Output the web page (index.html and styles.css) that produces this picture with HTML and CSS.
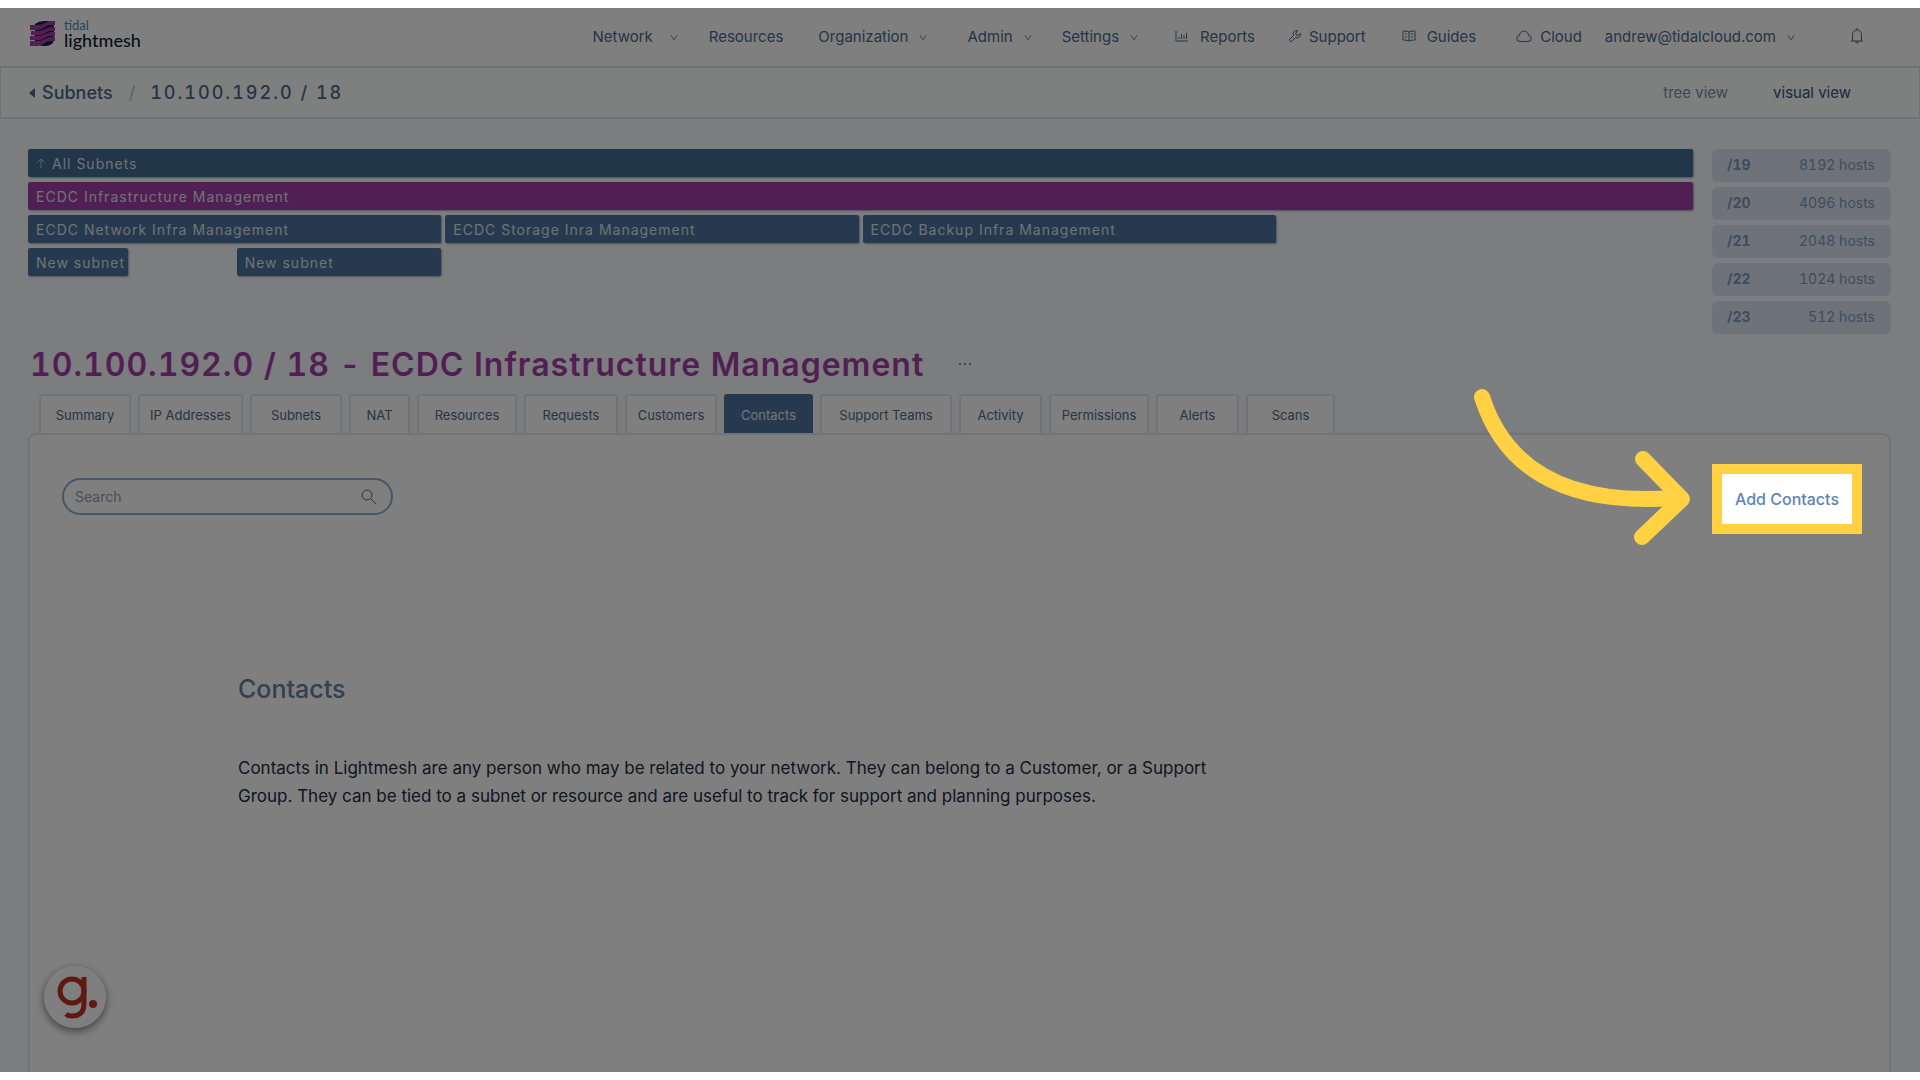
FILE: index.html
```html
<!DOCTYPE html>
<html lang="en">
<head>
<meta charset="utf-8">
<title>Tidal Lightmesh - Contacts</title>
<link rel="stylesheet" href="styles.css">
</head>
<body>
<div class="frame">
  <header class="topbar">
    <a class="brand" href="#">
      <svg class="brand-mark" viewBox="0 0 26 26" aria-hidden="true">
        <path d="M5 3Q9 0 14 0h4q6 2 6 6v13q-1 6-10 6-7 0-9-5z" fill="#151c3a"/>
        <g fill="#a23ea6"><path d="M0 4h7q5 0 8-2t6-2h4v4h-4q-4 0-6 2t-7 3H0z"/><path d="M1 10h7q4 0 7-2t6-2h4v4h-4q-4 0-6 2t-6 2H1z"/><path d="M0 15h7q5 0 8-2t6-2h4v4h-4q-4 0-6 2t-6 2H0z"/><path d="M0 20h7q5 0 8-2t6-2h4v4h-4q-4 0-6 2t-7 3H0z"/></g>
      </svg>
      <span class="brand-name"><span class="brand-top">tidal</span><span class="brand-bottom">lightmesh</span></span>
    </a>
    <nav class="menu">
      <a class="m-network" href="#">Network <svg class="chev" viewBox="0 0 10 8"><path d="M1 1l4 6 4-6"/></svg></a>
      <a class="m-resources" href="#">Resources</a>
      <a class="m-org" href="#">Organization <svg class="chev" viewBox="0 0 10 8"><path d="M1 1l4 6 4-6"/></svg></a>
      <a class="m-admin" href="#">Admin <svg class="chev" viewBox="0 0 10 8"><path d="M1 1l4 6 4-6"/></svg></a>
      <a class="m-settings" href="#">Settings <svg class="chev" viewBox="0 0 10 8"><path d="M1 1l4 6 4-6"/></svg></a>
      <a class="m-reports" href="#"><svg class="ico" viewBox="0 0 14 14"><path d="M1 2v10h12M4 10V8M6.500 10V5M9 10V6M11.500 10V4"/></svg> Reports</a>
      <a class="m-support" href="#"><svg class="ico" viewBox="0 0 14 14"><path d="M9.500 1.500a3.500 3.500 0 0 0-4 5L1 11l2 2 4.500-4.500a3.500 3.500 0 0 0 5-4L10 6.500 8 6V4z"/></svg> Support</a>
      <a class="m-guides" href="#"><svg class="ico" viewBox="0 0 14 14"><path d="M7 3v9M7 3Q6 2 1 2v9q5 0 6 1 1-1 6-1V2Q8 2 7 3zM3 5h2M3 8h2M9 5h2M9 8h2"/></svg> Guides</a>
      <a class="m-cloud" href="#"><svg class="ico wide" viewBox="0 0 16 14"><path d="M4 12.500a3 3 0 0 1-.5-6 4.500 4.500 0 0 1 9 0 3 3 0 0 1-.5 6z"/></svg> Cloud</a>
      <a class="m-user" href="#">andrew@tidalcloud.com <svg class="chev" viewBox="0 0 10 8"><path d="M1 1l4 6 4-6"/></svg></a>
      <button class="bell" type="button" aria-label="Notifications"><svg viewBox="0 0 14 16"><path d="M7 0v2M1 13h12M2.500 13V6.500a4.500 4.500 0 0 1 9 0V13M5.500 13q0 2 1.500 2t1.500-2"/></svg></button>
    </nav>
  </header>

  <div class="subbar">
    <div class="crumbs">
      <svg class="back" viewBox="0 0 6 10" aria-hidden="true"><path d="M6 0v10L0 5z"/></svg>
      <a class="crumb" href="#">Subnets</a>
      <span class="slash">/</span>
      <span class="crumb address">10.100.192.0 / 18</span>
    </div>
    <div class="views"><a class="tree" href="#">tree view</a><a class="visual" href="#">visual view</a></div>
  </div>

  <main class="content">
    <section class="map">
      <div class="blocks">
        <a class="block all" href="#"><svg class="up" viewBox="0 0 10 10"><path d="M5 10V1M1 5l4-4 4 4"/></svg>All Subnets</a>
        <a class="block current" href="#">ECDC Infrastructure Management</a>
        <a class="block quarter" href="#">ECDC Network Infra Management</a>
        <a class="block quarter" href="#">ECDC Storage Inra Management</a>
        <a class="block quarter" href="#">ECDC Backup Infra Management</a>
        <a class="block first" href="#">New subnet</a>
        <a class="block third" href="#">New subnet</a>
      </div>
      <ul class="sizes">
        <li><b>/19</b><span>8192 hosts</span></li>
        <li><b>/20</b><span>4096 hosts</span></li>
        <li><b>/21</b><span>2048 hosts</span></li>
        <li><b>/22</b><span>1024 hosts</span></li>
        <li><b>/23</b><span>512 hosts</span></li>
      </ul>
    </section>

    <div class="heading">
      <h1>10.100.192.0 / 18 - ECDC Infrastructure Management</h1>
      <button class="more" type="button" aria-label="More actions"><svg viewBox="0 0 14 4"><circle cx="2" cy="2" r="1"/><circle cx="7" cy="2" r="1"/><circle cx="12" cy="2" r="1"/></svg></button>
    </div>

    <nav class="tabs">
      <a class="w92" href="#">Summary</a>
      <a class="w105" href="#">IP Addresses</a>
      <a class="w92" href="#">Subnets</a>
      <a class="w61" href="#">NAT</a>
      <a class="w100" href="#">Resources</a>
      <a class="w94" href="#">Requests</a>
      <a class="w92" href="#">Customers</a>
      <a class="w89 active" href="#">Contacts</a>
      <a class="w132" href="#">Support Teams</a>
      <a class="w83" href="#">Activity</a>
      <a class="w100" href="#">Permissions</a>
      <a class="w83" href="#">Alerts</a>
      <a class="w89" href="#">Scans</a>
    </nav>

    <section class="panel">
      <div class="tools">
        <label class="search">
          <input type="search" placeholder="Search" aria-label="Search">
          <svg viewBox="0 0 16 16" aria-hidden="true"><circle cx="6" cy="6" r="5"/><path d="M10 10l5 5"/></svg>
        </label>
        <div class="spotlight">
          <button class="add" type="button">Add Contacts</button>
          <svg class="arrow" viewBox="0 0 224 164" aria-hidden="true"><path d="M12 14C32 77 85 124 205 115M173 76l39 40-40 38"/></svg>
        </div>
      </div>
      <div class="empty">
        <h2>Contacts</h2>
        <p>Contacts in Lightmesh are any person who may be related to your network. They can belong to a Customer, or a Support Group. They can be tied to a subnet or resource and are useful to track for support and planning purposes.</p>
      </div>
    </section>
  </main>

  <button class="badge" type="button" aria-label="Guide">
    <svg viewBox="0 0 62 62" aria-hidden="true"><circle cx="28" cy="25" r="12"/><path d="M40 11v27q0 12-12 12-4 0-6-2"/><circle class="dot" cx="49" cy="38" r="4"/></svg>
  </button>
</div>
</body>
</html>
```
FILE: styles.css
```css
* { box-sizing: border-box; }
body { margin: 0; padding: 8px 0; background: #fff; font-family: Inter, "Liberation Sans", sans-serif; color: #4a6a8a; }
a { color: inherit; text-decoration: none; }
button { font: inherit; border: 0; background: none; padding: 0; color: inherit; }
svg { fill: none; stroke: currentColor; flex: none; }
h1, h2, p, ul { margin: 0; padding: 0; }

.frame { position: relative; overflow: hidden; height: calc(100vh - 16px); display: flex; flex-direction: column; background: #f8fafe; }

.topbar { display: flex; justify-content: space-between; height: 58px; padding: 0 56px 0 30px; background: #fff; }
.brand { display: flex; gap: 8px; padding-top: 11px; }
.brand-mark { width: 26px; height: 26px; margin-top: 2px; stroke: none; }
.brand-name { display: flex; flex-direction: column; font-family: Lato, sans-serif; }
.brand-top { font-size: 13px; line-height: 13px; color: #4a8fb0; }
.brand-bottom { font-size: 18px; line-height: 17px; color: #0c1c2e; font-weight: 500; }
.menu { display: flex; align-items: center; height: 56px; font-size: 15px; }
.menu a { display: flex; align-items: center; }
.chev { width: 8px; height: 7px; margin: 3px 1px 0 11px; }
.ico { width: 14px; height: 14px; margin-right: 11px; }
.bell svg { width: 14px; height: 18px; display: block; }
.m-network .chev { margin-left: 17px; }
.m-network { margin-right: 30px; }
.m-resources { margin-right: 35px; }
.m-org { margin-right: 39px; }
.m-admin { margin-right: 29px; }
.m-settings { margin-right: 36px; }
.m-reports { margin-right: 33px; }
.m-support { margin-right: 36px; }
.m-support .ico { margin-right: 7px; }
.m-guides { margin-right: 40px; }
.ico.wide { width: 16px; margin-right: 8px; }
.m-cloud { margin-right: 23px; }
.m-user { margin-right: 54px; }

.subbar { display: flex; justify-content: space-between; align-items: center; height: 53px; padding: 0 68px 0 28px; background: #fcfffe; border: 2px solid #e0e4f4; border-left-width: 1px; border-right-width: 1px; flex: none; }
.crumbs { display: flex; align-items: center; font-size: 18px; font-weight: 500; }
.back { width: 6px; height: 10px; margin-right: 7px; fill: currentColor; stroke: none; }
.slash { margin: 0 15px 0 16px; color: #bcc4cc; font-weight: 400; }
.address { letter-spacing: 2px; font-variant-numeric: tabular-nums; }
.views { display: flex; gap: 45px; font-size: 15px; }
.tree { color: #7890a8; }
.visual { color: #2f5680; }

.content { flex: 1; display: flex; flex-direction: column; padding: 30px 29px 0 28px; }
.map { display: flex; gap: 19px; }
.blocks { flex: 1; display: grid; grid-template-columns: repeat(16, 1fr); grid-auto-rows: 28px; gap: 5px 4px; align-content: start; }
.block { display: flex; align-items: center; padding-left: 8px; background: #4c739c; color: #dce6f0; border-radius: 2px; font-size: 14px; letter-spacing: 1px; white-space: nowrap; box-shadow: 1px 1px 2px #9aa8bb; }
.all, .current { grid-column: span 16; }
.all { background: #446c94; }
.up { width: 10px; height: 10px; margin-right: 6px; opacity: .7; }
.current { background: #a43ea8; }
.quarter { grid-column: span 4; }
.first { grid-column: 1; grid-row: 4; }
.third { grid-column: 3 / span 2; grid-row: 4; }
.sizes { width: 179px; list-style: none; display: grid; gap: 5px; font-size: 14px; color: #7c9abc; font-variant-numeric: tabular-nums; }
.sizes li { display: flex; justify-content: space-between; align-items: center; height: 33px; padding: 0 16px 2px 15px; background: #dce6f2; border-radius: 6px; }
.sizes b { font-weight: 700; }

.heading { display: flex; align-items: center; gap: 34px; height: 60px; padding-left: 2px; }
h1 { font-size: 32px; font-weight: 600; letter-spacing: 1px; font-variant-numeric: tabular-nums; color: #a43ea8; white-space: nowrap; }
.more svg { width: 14px; height: 4px; display: block; fill: currentColor; stroke: none; }

.tabs { display: flex; gap: 7px; padding-left: 11px; font-size: 13px; }
.tabs a { display: flex; align-items: center; justify-content: center; height: 39px; background: #fff; border: 2px solid #e0e8f2; border-bottom: 0; border-radius: 3px 3px 0 0; white-space: nowrap; }
.tabs .active { background: #4c739c; border-color: #4c739c; color: #e6edf5; }
.w61 { width: 61px; } .w83 { width: 83px; } .w89 { width: 89px; } .w92 { width: 92px; } .w94 { width: 94px; } .w100 { width: 100px; } .w105 { width: 105px; } .w132 { width: 132px; }

.panel { flex: 1; background: #fff; border: 2px solid #e0e8f2; border-bottom: 0; border-radius: 8px 8px 0 0; padding: 29px 27px 0 32px; }
.tools { display: flex; justify-content: space-between; align-items: flex-start; }
.search { display: flex; align-items: center; width: 331px; height: 37px; margin-top: 14px; padding: 0 14px 0 11px; border: 2px solid #8caccc; border-radius: 19px; }
.search input { flex: 1; min-width: 0; border: 0; outline: 0; padding: 0; background: none; font: inherit; font-size: 14px; }
.search input::placeholder { color: #90a0b2; opacity: 1; }
.search svg { width: 16px; height: 16px; }

/* guided-tour highlight: the outer shadow dims the rest of the page */
.spotlight { position: relative; z-index: 2; padding: 10px; border: 0; background: #ffd143; box-shadow: 0 0 0 2400px rgba(0, 0, 0, .5); }
.add { display: block; width: 130px; height: 50px; background: #fff; color: #5c86b0; font-size: 16px; font-weight: 500; }
.arrow { position: absolute; right: 168px; top: -81px; width: 224px; height: 164px; stroke: #ffd143; stroke-width: 16; stroke-linecap: round; stroke-linejoin: round; }

.empty { max-width: 980px; margin: 139px 0 0 176px; }
h2 { font-size: 25px; line-height: 32px; font-weight: 500; color: #64809e; }
.empty p { margin-top: 49px; font-size: 17px; line-height: 28px; color: #1c2c44; }

.badge { position: absolute; left: 44px; bottom: 44px; width: 62px; height: 62px; border-radius: 50%; background: #fff; box-shadow: 0 3px 8px rgba(0, 0, 0, .5); }
.badge svg { display: block; width: 62px; height: 62px; stroke: #c03024; stroke-width: 5; }
.badge .dot { fill: #c03024; stroke: none; }
```
